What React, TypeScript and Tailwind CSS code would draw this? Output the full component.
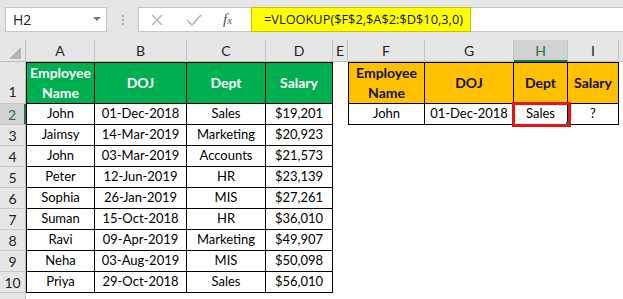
import React from "react"

const leftW = ["w-[69px]", "w-[92px]", "w-[79px]", "w-[67px]"]
const rightW = ["w-[77px]", "w-[89px]", "w-[54px]", "w-[51px]"]

const colHeaders = [
  { l: "A", w: "w-[69px]" },
  { l: "B", w: "w-[92px]" },
  { l: "C", w: "w-[79px]" },
  { l: "D", w: "w-[67px]" },
  { l: "E", w: "w-[15px]" },
  { l: "F", w: "w-[77px]" },
  { l: "G", w: "w-[89px]" },
  { l: "H", w: "w-[54px]", sel: true },
  { l: "I", w: "w-[51px]" },
]

const header = ["Employee Name", "DOJ", "Dept", "Salary"]

const data = [
  ["John", "01-Dec-2018", "Sales", "$19,201"],
  ["Jaimsy", "14-Mar-2019", "Marketing", "$20,923"],
  ["John", "03-Mar-2019", "Accounts", "$21,573"],
  ["Peter", "12-Jun-2019", "HR", "$23,139"],
  ["Sophia", "26-Jan-2019", "MIS", "$27,261"],
  ["Suman", "15-Oct-2018", "HR", "$36,010"],
  ["Ravi", "09-Apr-2019", "Marketing", "$49,907"],
  ["Neha", "03-Aug-2019", "MIS", "$50,098"],
  ["Priya", "29-Oct-2018", "Sales", "$56,010"],
]

const lookupRow = ["John", "01-Dec-2018", "Sales", "?"]

const RowHead = ({ n, sel, align = "items-center" }: { n: number; sel?: boolean; align?: string }) => (
  <div
    className={`w-[26px] shrink-0 h-full box-border flex justify-center ${align} border-b border-[#c9c9c9] text-[14px] ${
      sel ? "bg-[#d2d2d2] text-[#217346] border-r-2 border-r-[#217346]" : "bg-[#e6e6e6] text-[#222] border-r border-r-[#bdbdbd]"
    }`}
  >
    <span className={align === "items-end" ? "pb-[1px]" : ""}>{n}</span>
  </div>
)

const TableCell = ({
  text,
  w,
  first,
  top,
  className = "",
}: {
  text: string
  w: string
  first?: boolean
  top?: boolean
  className?: string
}) => (
  <div
    className={`${w} shrink-0 h-full box-border border-black border-r border-b ${first ? "border-l" : ""} ${
      top ? "border-t" : ""
    } flex items-center justify-center text-center ${className}`}
  >
    {text}
  </div>
)

export default function App() {
  return (
    <div className="relative w-[623px] h-[299px] overflow-hidden bg-[#e6e6e6] font-['Lato',sans-serif] text-[13px] text-black">
      {/* formula bar */}
      <div className="h-[40px] flex items-start pt-[7px] pl-[5px]">
        <div className="w-[102px] h-[25px] bg-white border border-[#c6c6c6] flex items-center justify-between pl-[7px] pr-[5px] font-['Open_Sans',sans-serif] text-[14px] text-[#222]">
          <span>H2</span>
          <svg width="8" height="5" viewBox="0 0 8 5">
            <path d="M0 0 L8 0 L4 4 Z" fill="#7a7a7a" />
          </svg>
        </div>
        <div className="w-[31px] h-[25px] flex flex-col items-center justify-center gap-[2px]">
          <span className="w-[2px] h-[2px] bg-[#a6a6a6]" />
          <span className="w-[2px] h-[2px] bg-[#a6a6a6]" />
          <span className="w-[2px] h-[2px] bg-[#a6a6a6]" />
        </div>
        <div className="w-[113px] h-[25px] bg-white border border-[#c6c6c6] border-r-0 flex items-center">
          <svg className="ml-[12px]" width="12" height="12" viewBox="0 0 12 12">
            <path d="M1 1 L11 11 M11 1 L1 11" stroke="#b3b3b3" strokeWidth="1.3" />
          </svg>
          <svg className="ml-[23px]" width="16" height="12" viewBox="0 0 16 12">
            <path d="M1 6 L6 11 L15 1" stroke="#b3b3b3" strokeWidth="1.6" fill="none" />
          </svg>
          <span className="ml-[21px] font-['Liberation_Serif',serif] italic text-[15px] text-[#555] leading-none">
            f<span className="text-[11px]">x</span>
          </span>
        </div>
        <div className="w-[220px] h-[25px] bg-[#ffff00] border border-[#c4c400] flex items-center pl-[12px] font-['Open_Sans',sans-serif] text-[12.8px] text-[#111] whitespace-nowrap">
          =VLOOKUP($F$2,$A$2:$D$10,3,0)
        </div>
        <div className="flex-1 h-[25px] bg-white border-y border-[#c6c6c6]" />
      </div>

      {/* column headers */}
      <div className="h-[22px] flex text-[14px]">
        <div className="w-[26px] shrink-0 h-full box-border border-r border-b border-[#bdbdbd] flex items-end justify-end pr-[4px] pb-[2px]">
          <svg width="12" height="12" viewBox="0 0 12 12">
            <path d="M12 0 L12 12 L0 12 Z" fill="#b5b5b5" />
          </svg>
        </div>
        {colHeaders.map((c) => (
          <div
            key={c.l}
            className={`${c.w} shrink-0 h-full box-border border-r border-[#c3c3c3] flex items-center justify-center ${
              c.sel ? "bg-[#d2d2d2] text-[#217346] border-b-2 border-b-[#217346]" : "text-[#262626] border-b border-b-[#bdbdbd]"
            }`}
          >
            {c.l}
          </div>
        ))}
        <div className="flex-1 h-full border-b border-[#bdbdbd]" />
      </div>

      {/* row 1 */}
      <div className="h-[42px] flex bg-white">
        <RowHead n={1} align="items-end" />
        {header.map((t, i) => (
          <TableCell
            key={"l" + t}
            text={t}
            w={leftW[i]}
            first={i === 0}
            top
            className="bg-[#00b050] text-white font-bold text-[14px] leading-[20px] px-[2px]"
          />
        ))}
        <div className="w-[15px] shrink-0" />
        {header.map((t, i) => (
          <TableCell
            key={"r" + t}
            text={t}
            w={rightW[i]}
            first={i === 0}
            top
            className="bg-[#ffc000] text-[#111] font-bold text-[14px] leading-[20px] px-[2px]"
          />
        ))}
      </div>

      {/* data rows */}
      {data.map((row, r) => (
        <div key={r} className="h-[21px] flex bg-white">
          <RowHead n={r + 2} sel={r === 0} />
          {row.map((t, i) => (
            <TableCell key={i} text={t} w={leftW[i]} first={i === 0} />
          ))}
          {r === 0 && (
            <>
              <div className="w-[15px] shrink-0" />
              {lookupRow.map((t, i) => (
                <TableCell key={"lk" + i} text={t} w={rightW[i]} first={i === 0} />
              ))}
            </>
          )}
        </div>
      ))}

      {/* row 11 */}
      <div className="h-[10px] flex bg-white">
        <div className="w-[26px] shrink-0 h-full bg-[#e6e6e6] border-r border-[#bdbdbd]" />
      </div>

      {/* selection box on H2 */}
      <div className="absolute left-[512px] top-[102px] w-[59px] h-[25px] border-[3px] border-[#ee1111] pointer-events-none">
        <div className="absolute right-[-1px] bottom-[-1px] w-[3px] h-[3px] bg-[#217346]" />
      </div>
    </div>
  )
}
